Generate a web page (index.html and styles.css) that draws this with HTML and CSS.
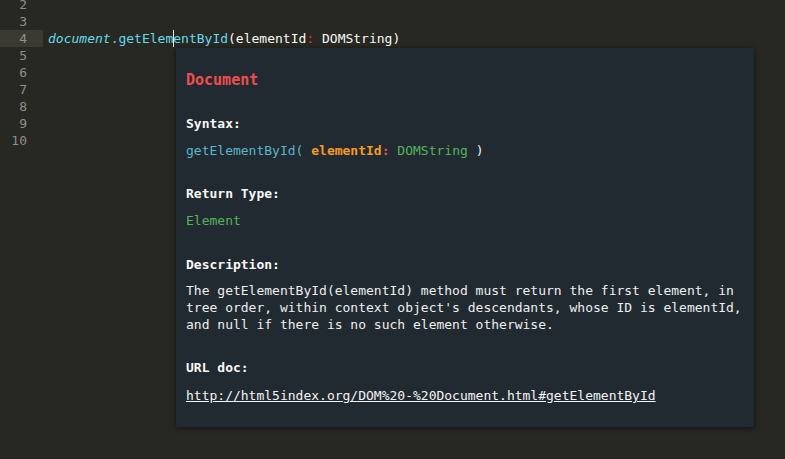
FILE: index.html
```html
<!DOCTYPE html>
<html>
<head>
<meta charset="utf-8">
<link rel="stylesheet" href="styles.css">
</head>
<body>
<div class="editor">
  <div class="line"><span class="gutter">2</span><span class="code"></span></div>
  <div class="line"><span class="gutter">3</span><span class="code"></span></div>
  <div class="line current"><span class="gutter">4</span><span class="code"><span class="obj">document</span><span class="fn">.getElem</span><span class="caret"></span><span class="fn">entById</span>(elementId<span class="colon">:</span> DOMString)</span></div>
  <div class="line"><span class="gutter">5</span><span class="code"></span></div>
  <div class="line"><span class="gutter">6</span><span class="code"></span></div>
  <div class="line"><span class="gutter">7</span><span class="code"></span></div>
  <div class="line"><span class="gutter">8</span><span class="code"></span></div>
  <div class="line"><span class="gutter">9</span><span class="code"></span></div>
  <div class="line"><span class="gutter">10</span><span class="code"></span></div>
</div>

<div class="tooltip">
  <div class="title">Document</div>
  <div class="section first">
    <div class="label">Syntax:</div>
    <div class="value"><span class="sig-fn">getElementById(</span> <span class="sig-param">elementId</span><span class="sig-colon">:</span> <span class="sig-type">DOMString</span> <span class="sig-paren">)</span></div>
  </div>
  <div class="section">
    <div class="label">Return Type:</div>
    <div class="value sig-type">Element</div>
  </div>
  <div class="section wide">
    <div class="label tight">Description:</div>
    <div class="value desc">The getElementById(elementId) method must return the first element, in tree order, within context object's descendants, whose ID is elementId, and null if there is no such element otherwise.</div>
  </div>
  <div class="section">
    <div class="label">URL doc:</div>
    <div class="value"><a class="link" href="#">http://html5index.org/DOM%20-%20Document.html#getElementById</a></div>
  </div>
</div>
</body>
</html>
```

FILE: styles.css
```css
html, body {
  margin: 0;
  padding: 0;
  background: #272822;
  overflow: hidden;
}

body {
  width: 785px;
  height: 459px;
  position: relative;
  font-family: "DejaVu Sans Mono", "Liberation Mono", monospace;
  font-size: 13px;
}

.editor {
  margin-top: -4px;
}

.line {
  display: flex;
  height: 17px;
  line-height: 17px;
}

.gutter {
  width: 27px;
  padding-right: 16px;
  text-align: right;
  color: #8f908a;
  flex: none;
}

.current .gutter {
  background: #3b3a32;
}

.code {
  padding-left: 5px;
  color: #f8f8f2;
  white-space: pre;
  display: flex;
  align-items: center;
}

.obj {
  color: #66d9ef;
  font-style: italic;
}

.fn {
  color: #66d9ef;
}

.colon {
  color: #f92672;
}

.caret {
  display: inline-block;
  width: 1px;
  height: 17px;
  background: #e8e8e8;
  margin-right: -1px;
}

.tooltip {
  position: absolute;
  left: 176px;
  top: 48px;
  width: 578px;
  height: 379px;
  box-sizing: border-box;
  padding: 24px 10px 0 10px;
  background: #222a31;
  box-shadow: 0 1px 5px rgba(0, 0, 0, 0.55);
  color: #f4f4f4;
  line-height: 17px;
}

.title {
  font-size: 15px;
  font-weight: bold;
  color: #f04e4e;
}

.section {
  margin-top: 26px;
}

.section.first {
  margin-top: 26px;
}

.section.wide {
  margin-top: 27px;
}

.label {
  font-weight: bold;
  color: #f8f8f8;
  margin-bottom: 10px;
}

.label.tight {
  margin-bottom: 9px;
}

.value {
  white-space: normal;
}

.sig-fn {
  color: #5ab6cc;
}

.sig-param {
  color: #f59b25;
  font-weight: bold;
}

.sig-colon {
  color: #e8505a;
  font-weight: bold;
}

.sig-type {
  color: #55b45c;
}

.sig-paren {
  color: #f4f4f4;
}

.desc {
  color: #eeeeee;
}

.link {
  color: #f4f4f4;
  text-decoration: underline;
  display: inline-block;
  margin-top: 1px;
}
```
